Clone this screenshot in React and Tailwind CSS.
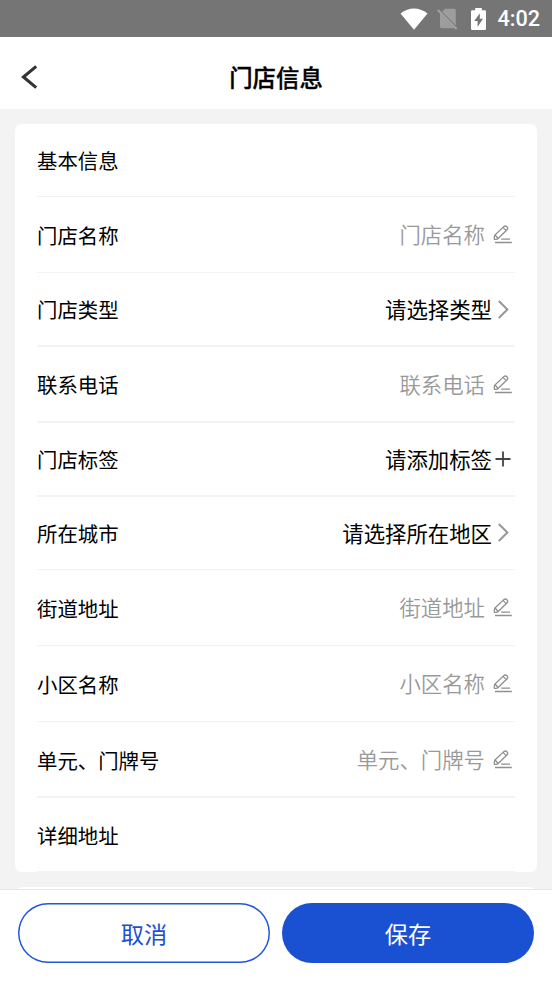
const ROWS = [
  { label: '基本信息', size: 'h-[73px] border-b' },
  { label: '门店名称', value: '门店名称', kind: 'edit', size: 'h-[76px] border-b pt-px' },
  { label: '门店类型', value: '请选择类型', kind: 'select', size: 'h-[74px] border-b-2 pt-px' },
  { label: '联系电话', value: '联系电话', kind: 'edit', size: 'h-[76px] border-b-2 pt-px' },
  { label: '门店标签', value: '请添加标签', kind: 'add', size: 'h-[74px] border-b-2 pt-px' },
  { label: '所在城市', value: '请选择所在地区', kind: 'select', size: 'h-[73px] border-b' },
  { label: '街道地址', value: '街道地址', kind: 'edit', size: 'h-[76px] border-b pt-px' },
  { label: '小区名称', value: '小区名称', kind: 'edit', size: 'h-[76px] border-b pt-px' },
  { label: '单元、门牌号', value: '单元、门牌号', kind: 'edit', size: 'h-[76px] border-b-2 pt-0.5' },
  { label: '详细地址', size: 'h-[74px] border-b pt-0.5' },
];

function EditIcon() {
  return (
    <svg className="ml-[8px] mr-[3px] h-[19px] w-[19px]" viewBox="0 0 19 19" fill="none" stroke="#8f8f8f" strokeWidth="1.3">
      <path d="M2.2 9.8 10.8 1.6Q12.4.3 13.9 1.7T14.1 4.8L5.4 13.2Q4.4 14.3 2.8 14.3H2Q1 14.3 1.2 13.2L1.4 11.5Q1.5 10.5 2.2 9.8ZM10.2 2.6l2.9 2.8M2.2 10.2l2.6 2.8" strokeLinejoin="round" />
      <path d="M8.2 14.2H17M2 17.5H18.8" />
    </svg>
  );
}

function ChevronIcon() {
  return (
    <svg className="ml-[6px] mr-[6px] h-[19px] w-[11px]" viewBox="0 0 11 19" fill="none" stroke="#979797" strokeWidth="2">
      <path d="m.8 1 8.6 8.5L.8 18" />
    </svg>
  );
}

function PlusIcon() {
  return (
    <svg className="ml-[3px] mr-[4px] h-4 w-4" viewBox="0 0 16 16" fill="none" stroke="#444" strokeWidth="1.8">
      <path d="M8 .5v15M.5 8h15" />
    </svg>
  );
}

function Row({ label, value, kind, size }) {
  return (
    <div className={`flex items-center justify-between border-[#f3f3f3] ${size}`}>
      <span className="text-[20.4px] text-black">{label}</span>
      {value && (
        <div className="flex items-center pb-px">
          <span className={`text-[21.4px] ${kind === 'edit' ? 'pb-px font-[350] text-[#999]' : 'text-black'}`}>{value}</span>
          {kind === 'edit' && <EditIcon />}
          {kind === 'select' && <ChevronIcon />}
          {kind === 'add' && <PlusIcon />}
        </div>
      )}
    </div>
  );
}

function StatusBar() {
  return (
    <div className="flex h-[37px] shrink-0 items-center justify-end bg-[#757575] pr-3 text-white">
      <svg className="h-[22px] w-[28px]" viewBox="0 0 28 22">
        <path d="M.5 5.5Q14-4.6 27.5 5.5L14 21.8Z" fill="#fff" />
      </svg>
      <svg className="ml-[9px] h-[22px] w-[21px]" viewBox="0 0 21 22">
        <path d="M8.2.8H17.2Q18.8.8 18.8 2.5V17.6L5 3.8ZM3 5.5 17.5 20.2H4.8Q3 20.2 3 18.5Z" fill="#9d9d9d" />
        <path d="m.8 2 18.8 19" stroke="#a3a3a3" strokeWidth="1.8" />
      </svg>
      <svg className="ml-[13px] h-[22px] w-[15px]" viewBox="0 0 15 22">
        <path d="M4.2 0h6.6v2.3H13.8Q15 2.3 15 3.5V20.8Q15 22 13.8 22H1.2Q0 22 0 20.8V3.5Q0 2.3 1.2 2.3h3Z" fill="#fff" />
        <path d="M8.8 5.2 3.2 13H6.6V19L11.9 10.8H8.8Z" fill="#757575" />
      </svg>
      <span className="ml-[11px] pt-px font-[Roboto,sans-serif] text-[21.6px] leading-none font-medium">4:02</span>
    </div>
  );
}

export default function App() {
  return (
    <div className="flex h-[981px] w-[552px] flex-col overflow-hidden bg-[#f3f3f3] font-['Noto_Sans_CJK_SC',sans-serif] leading-none">
      <StatusBar />
      <header className="grid h-[72px] shrink-0 grid-cols-[1fr_auto_1fr] items-center bg-white pt-2">
        <svg className="ml-[21px] h-[24px] w-[17px]" viewBox="0 0 17 24" fill="none" stroke="#333" strokeWidth="3.1">
          <path d="M15.2 1.4 2.4 12l12.8 10.6" />
        </svg>
        <h1 className="pt-px text-[23.4px] font-medium text-black [-webkit-text-stroke:0.35px_#000]">门店信息</h1>
      </header>
      <main className="min-h-0 flex-1 overflow-hidden px-[15px] pt-[15px]">
        <section className="h-[748px] rounded-[7px] bg-white px-[22px]">
          {ROWS.map((row) => (
            <Row key={row.label} {...row} />
          ))}
        </section>
        <section className="mt-[15px] h-20 rounded-[7px] bg-white" />
      </main>
      <footer className="flex h-[92px] shrink-0 gap-3 border-t border-[#e5e6eb] bg-white px-[18px] pt-[13px] text-[23.2px]">
        <button className="h-[60px] w-[252px] rounded-full pt-px text-[#1a50d2] shadow-[inset_0_0_0_1.5px_#1f57dc]">取消</button>
        <button className="h-[60px] w-[252px] rounded-full bg-[#1a50d2] pt-px text-white">保存</button>
      </footer>
    </div>
  );
}
